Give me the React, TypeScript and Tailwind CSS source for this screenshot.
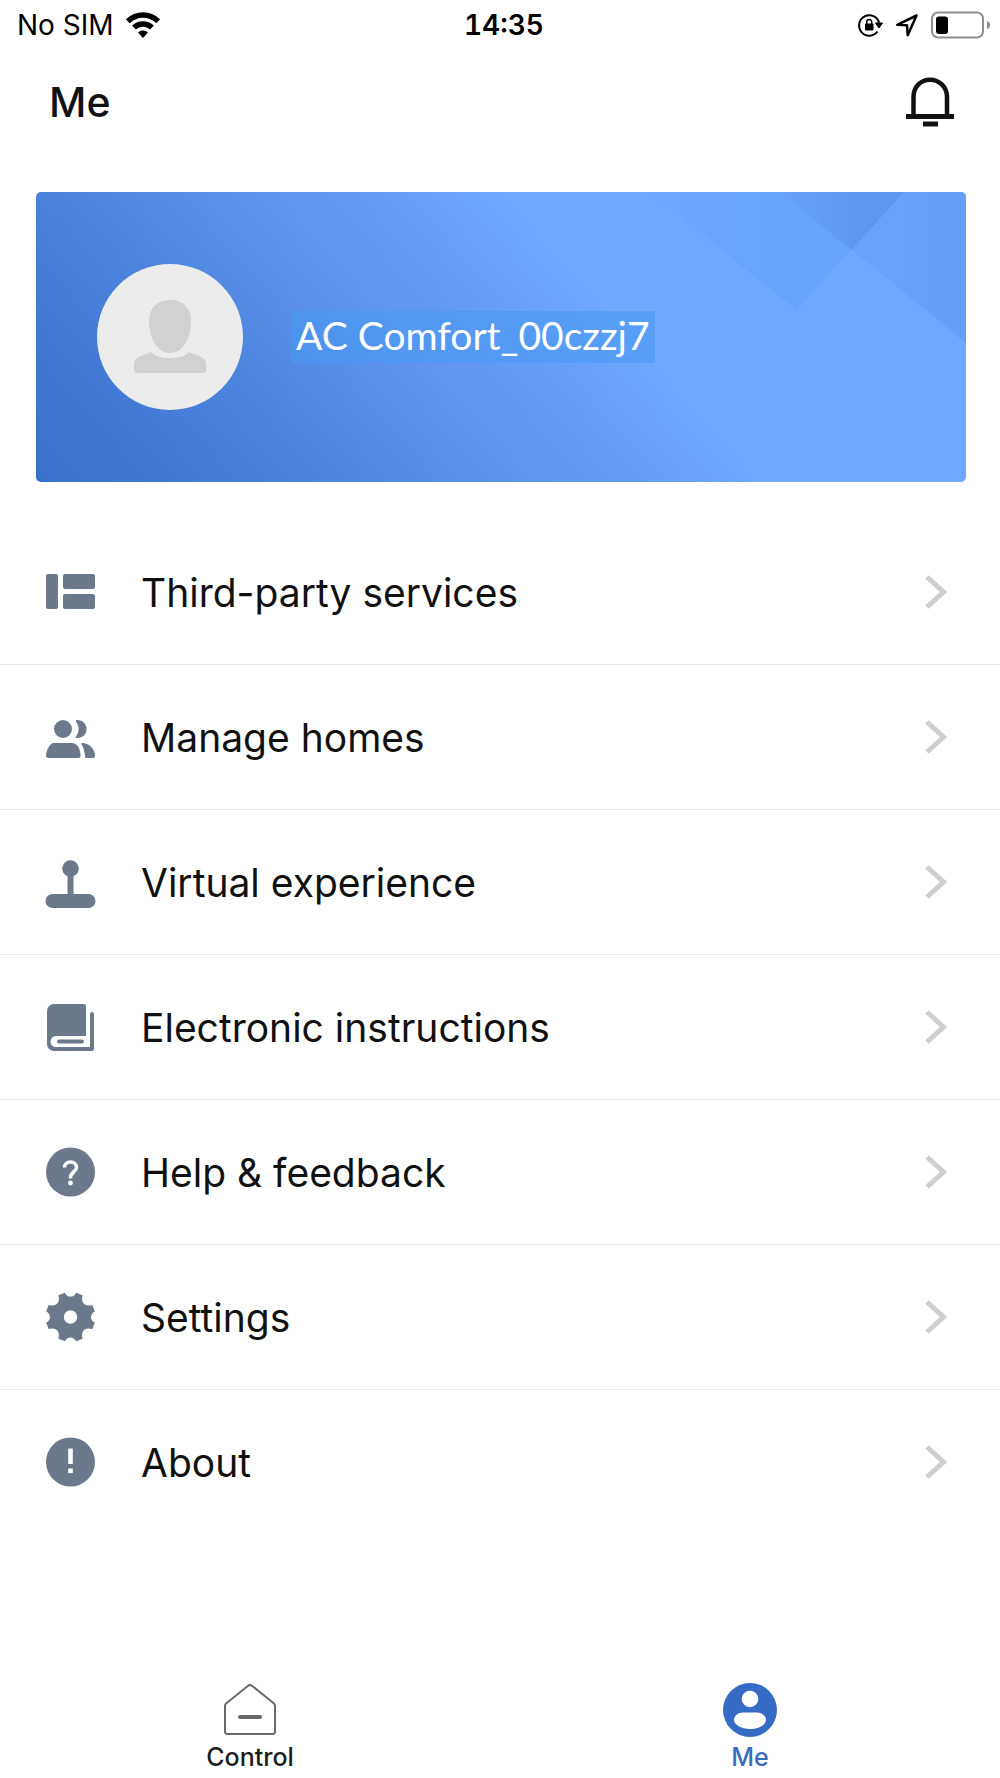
import type { ReactNode } from "react";

type MenuItem = {
  label: string;
  icon: ReactNode;
};

// Eight teeth; the notches on the diagonals are wider than the ones on the axes.
function gearPath(cx: number, cy: number): string {
  const at = (degrees: number, radius: number): string => {
    const rad = (degrees * Math.PI) / 180;
    return `${(cx + radius * Math.cos(rad)).toFixed(2)} ${(cy + radius * Math.sin(rad)).toFixed(2)}`;
  };
  const parts = Array.from({ length: 8 }, (_, i) => {
    const mid = i * 45;
    const half = i % 2 === 0 ? 13 : 16;
    const inner = i % 2 === 0 ? 19.5 : 17.5;
    return `${i === 0 ? "M" : "L"}${at(mid - half, 25)}C${at(mid - 10, inner)} ${at(mid + 10, inner)} ${at(mid + half, 25)}`;
  });
  return `${parts.join("")}Z`;
}

function MenuIcon({ children }: { children: ReactNode }) {
  return (
    <svg viewBox="0 0 50 50" className="size-[50px] shrink-0 overflow-visible" fill="#6b798a" aria-hidden="true">
      {children}
    </svg>
  );
}

const menu: MenuItem[] = [
  {
    label: "Third-party services",
    icon: (
      <MenuIcon>
        <rect x="0" y="7" width="12" height="35" rx="2" />
        <rect x="17" y="7" width="32" height="15" rx="2" />
        <rect x="17" y="27" width="32" height="15" rx="2" />
      </MenuIcon>
    ),
  },
  {
    label: "Manage homes",
    icon: (
      <MenuIcon>
        <circle cx="17" cy="17" r="9" />
        <path d="M31 8C37 8 40.500 12 40.500 17S37 26 31 26C29.500 26 29 25.500 30 24.500C33.500 19.500 33.500 14.500 30 9.500C29.500 8.500 30 8 31 8Z" />
        <path d="M8 31H26C31 31 34 36 34.500 43C34.500 45 34 46 32.500 46H2C0.500 46 0 45 0 43C1 37 4 31 8 31Z" />
        <path d="M36 31C43 31 48 36 49 43C49 45 48.500 46 47 46H40C39 46 39 45 39 44C38.500 39 37.500 35 35.500 32.500C35 31.500 35.200 31 36 31Z" />
      </MenuIcon>
    ),
  },
  {
    label: "Virtual experience",
    icon: (
      <MenuIcon>
        <circle cx="24.5" cy="11.500" r="8.300" />
        <rect x="21.500" y="17" width="6" height="22" />
        <rect x="-0.500" y="37" width="50" height="14" rx="7" />
      </MenuIcon>
    ),
  },
  {
    label: "Electronic instructions",
    icon: (
      <MenuIcon>
        <path d="M8 2H38a2 2 0 0 1 2 2V34H10a5.500 5.500 0 0 0 0 11H44V12a2 2 0 0 1 4 0V47a2 2 0 0 1-2 2H8a7 7 0 0 1-7-7V9a7 7 0 0 1 7-7Z" />
        <rect x="11" y="37.500" width="27" height="4" rx="2" />
      </MenuIcon>
    ),
  },
  {
    label: "Help & feedback",
    icon: (
      <MenuIcon>
        <circle cx="24.5" cy="25" r="24.500" />
        <path
          d="M18.500 20.500C18.500 17 21 15 24.500 15S30.500 17 30.500 20.500C30.500 24.500 24.500 25.500 24.500 30.500V31.500"
          fill="none"
          stroke="#fff"
          strokeWidth="3.500"
        />
        <circle cx="24.5" cy="36" r="2.400" fill="#fff" />
      </MenuIcon>
    ),
  },
  {
    label: "Settings",
    icon: (
      <MenuIcon>
        <path
          d={`${gearPath(24.5, 25)}M24.500 18.300a6.700 6.700 0 1 0 0 13.400a6.700 6.700 0 1 0 0-13.400Z`}
          fillRule="evenodd"
        />
      </MenuIcon>
    ),
  },
  {
    label: "About",
    icon: (
      <MenuIcon>
        <circle cx="24.5" cy="25" r="24.500" />
        <rect x="22.200" y="11.500" width="4.600" height="15.500" fill="#fff" />
        <rect x="22.200" y="31.500" width="4.600" height="4.600" fill="#fff" />
      </MenuIcon>
    ),
  },
];

function WifiIcon() {
  return (
    <svg viewBox="0 0 34 27" className="h-[27px] w-[34px]" fill="none" stroke="#000" strokeWidth="5.500" aria-hidden="true">
      <path d="M1.800 9.300C10.500 0.900 23.500 0.900 32.200 9.300" />
      <path d="M8 15.600C13 10.800 21 10.800 26 15.600" />
      <path d="M17 18.500C19 18.500 20.700 19.300 22 20.500L17 26L12 20.500C13.300 19.300 15 18.500 17 18.500Z" fill="#000" stroke="none" />
    </svg>
  );
}

function RotationLockIcon() {
  return (
    <svg viewBox="0 0 26 26" className="size-[26px]" fill="none" stroke="#000" aria-hidden="true">
      <path d="M22.200 11A10.200 10.200 0 1 0 20.500 19.500" strokeWidth="2" />
      <path d="M18.500 11H25.500L22 16Z" fill="#000" stroke="#000" strokeLinejoin="round" />
      <rect x="8" y="11.500" width="8.500" height="7" rx="1" fill="#000" stroke="none" />
      <path d="M9.700 12V10a2.500 2.500 0 0 1 5 0V12" strokeWidth="1.500" />
    </svg>
  );
}

function LocationIcon() {
  return (
    <svg viewBox="0 0 24 24" className="size-6" fill="none" stroke="#000" strokeWidth="2.500" strokeLinejoin="round" aria-hidden="true">
      <path d="M21.500 2.500L2.200 11.800L12 12.300L12.700 22.200Z" />
    </svg>
  );
}

function BatteryIcon() {
  return (
    <svg viewBox="0 0 60 28" className="h-7 w-[60px]" aria-hidden="true">
      <rect x="1" y="1.500" width="51" height="25" rx="6" fill="none" stroke="#8e8e8e" strokeWidth="2" />
      <rect x="5" y="5.500" width="12" height="17.500" rx="3" fill="#000" />
      <path d="M56 10C60 11 60 17 56 18Z" fill="#8e8e8e" />
    </svg>
  );
}

function StatusBar() {
  return (
    <div className="grid h-[50px] grid-cols-3 items-center pl-[17px] pr-[9px] text-[28px] leading-8 text-black">
      <div className="flex items-center gap-3">
        <span>No SIM</span>
        <WifiIcon />
      </div>
      <span className="text-center font-semibold tabular-nums">14:35</span>
      <div className="flex items-center justify-end gap-3">
        <RotationLockIcon />
        <LocationIcon />
        <BatteryIcon />
      </div>
    </div>
  );
}

function ProfileCard() {
  return (
    <section className="relative ml-9 mr-[34px] flex h-[290px] items-center overflow-hidden rounded-[5px] bg-[linear-gradient(48deg,#3a6fcb_0%,#4c83dd_24%,#6197ee_44%,#6fa8ff_61%,#6fa8ff_100%)] pl-[61px]">
      <svg
        viewBox="0 0 930 290"
        preserveAspectRatio="none"
        className="absolute inset-0 h-full w-full"
        aria-hidden="true"
      >
        <defs>
          <linearGradient id="fold" x1="0" y1="0" x2="1" y2="0">
            <stop offset="0" stopColor="#6ca7fd" />
            <stop offset="0.500" stopColor="#66a5fa" />
          </linearGradient>
          <linearGradient id="shade" x1="0" y1="0" x2="1" y2="0">
            <stop offset="0" stopColor="#66a4f9" />
            <stop offset="0.700" stopColor="#5d98ee" />
          </linearGradient>
          <linearGradient id="wing" x1="0" y1="0" x2="1" y2="0">
            <stop offset="0" stopColor="#6ba5fb" />
            <stop offset="1" stopColor="#659ff5" />
          </linearGradient>
        </defs>
        <path d="M614 0L760 118L868 0Z" fill="url(#fold)" />
        <path d="M742 0L816 58L868 0Z" fill="url(#shade)" />
        <path d="M868 0L816 58L930 151V0Z" fill="url(#wing)" />
      </svg>
      <div className="relative flex items-center gap-12">
        <svg viewBox="0 0 146 146" className="size-[146px] shrink-0" role="img" aria-label="Avatar">
          <circle cx="73" cy="73" r="73" fill="#ececec" />
          <path d="M73 36C86 36 94 44 94 57C94 74 86 89 73 89S52 74 52 57C52 44 60 36 73 36Z" fill="#d1d1d1" />
          <path
            d="M54 88C61 96 85 96 92 88L104 93C108 95 109 97 109 101V106Q109 109 106 109H40Q37 109 37 106V101C37 97 38 95 42 93Z"
            fill="#d1d1d1"
          />
        </svg>
        <span className="bg-[#4a9af5]/60 px-[5px] pb-1 font-[Lato,sans-serif] text-[39px] leading-[48px] text-white">
          AC Comfort_00czzj7
        </span>
      </div>
    </section>
  );
}

export default function App() {
  return (
    <div className="flex min-h-screen flex-col bg-white font-[Inter,sans-serif] text-[#111]">
      <StatusBar />

      <header className="flex h-[104px] items-center justify-between pl-[49px] pr-[45px]">
        <h1 className="text-[41px] leading-[48px] font-medium">Me</h1>
        <button type="button" aria-label="Notifications">
          <svg viewBox="0 0 50 50" className="size-[50px]" fill="none" stroke="#111" strokeWidth="4.500" aria-hidden="true">
            <path d="M8.500 39V20C8.500 10 15.500 2.700 25 2.700S42 10 42 20V39" />
            <path d="M1 39.500H49" strokeWidth="5" />
            <path d="M18 47H33" strokeWidth="5" />
          </svg>
        </button>
      </header>

      <main className="pt-[38px]">
        <ProfileCard />

        <ul className="mt-[38px] divide-y divide-[#e6e6e6]">
          {menu.map((item) => (
            <li key={item.label}>
              <a href="#" className="flex h-36 items-center pl-[46px] pr-[53px]">
                {item.icon}
                <span className="ml-[45px] flex-1 pt-[2px] text-[39px] leading-[48px]">{item.label}</span>
                <svg viewBox="0 0 22 36" className="h-9 w-[22px]" fill="none" stroke="#cfcfcf" strokeWidth="5" aria-hidden="true">
                  <path d="M2 3L18.500 18L2 33" />
                </svg>
              </a>
            </li>
          ))}
        </ul>
      </main>

      <nav className="mt-auto grid grid-cols-2 pb-[5px] text-[25px] font-medium">
        <a href="#" className="flex flex-col items-center gap-1 text-[#1c1c1c]">
          <svg viewBox="0 0 54 54" className="size-[54px]" fill="none" stroke="#6a6a6a" strokeWidth="2" strokeLinejoin="round" aria-hidden="true">
            <path d="M24.500 3.200Q27 1 29.500 3.200L51 20.500Q52 21.500 52 23V48.500Q52 51 49.500 51H4.500Q2 51 2 48.500V23Q2 21.500 3 20.500Z" />
            <path d="M17 34H37" strokeWidth="4" strokeLinecap="round" />
          </svg>
          <span className="leading-8">Control</span>
        </a>
        <a href="#" aria-current="page" className="flex flex-col items-center gap-1 text-[#3a6cbd]">
          <svg viewBox="0 0 54 54" className="size-[54px]" fill="#fff" aria-hidden="true">
            <circle cx="27" cy="27" r="27" fill="#356bc4" />
            <circle cx="27" cy="16" r="8.300" />
            <path d="M20 29.500H34C39 29.500 43 33 43 37C43 41.500 36 46 27 46S11 41.500 11 37C11 33 15 29.500 20 29.500Z" />
          </svg>
          <span className="leading-8">Me</span>
        </a>
      </nav>
    </div>
  );
}
